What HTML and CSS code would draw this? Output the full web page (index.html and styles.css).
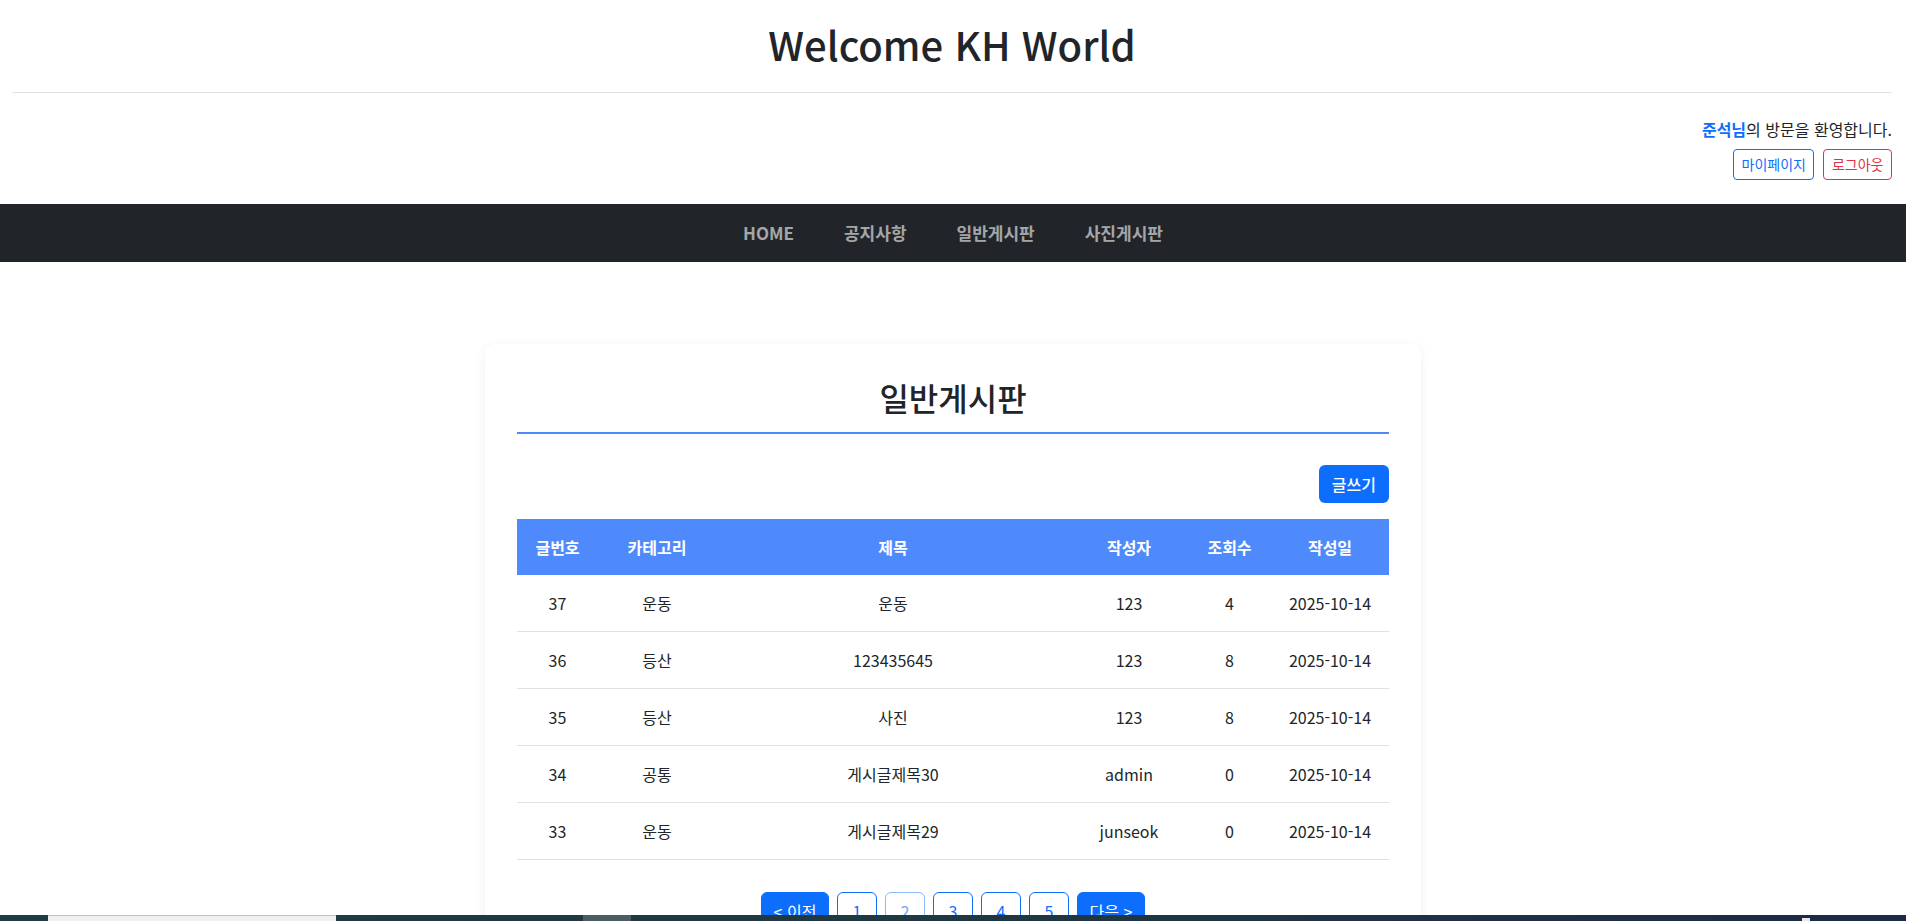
FILE: index.html
```html
<!DOCTYPE html>
<html lang="ko">
<head>
<meta charset="utf-8">
<title>Welcome KH World</title>
<link rel="stylesheet" href="styles.css">
</head>
<body>
<header class="site-header">
  <h1 class="site-title">Welcome KH World</h1>
  <div class="divider"></div>
  <div class="user-area">
    <p class="welcome"><strong class="user-name">준석님</strong>의 방문을 환영합니다.</p>
    <div class="user-actions">
      <a class="btn-sm btn-outline-primary" href="#">마이페이지</a>
      <a class="btn-sm btn-outline-danger" href="#">로그아웃</a>
    </div>
  </div>
</header>
<nav class="main-nav">
  <a class="nav-link" href="#">HOME</a>
  <a class="nav-link" href="#">공지사항</a>
  <a class="nav-link" href="#">일반게시판</a>
  <a class="nav-link" href="#">사진게시판</a>
</nav>
<main class="content">
  <section class="board-card">
    <h2 class="board-title">일반게시판</h2>
    <div class="board-toolbar">
      <a class="btn-write" href="#">글쓰기</a>
    </div>
    <table class="board-table">
      <colgroup>
        <col class="c-no"><col class="c-cat"><col class="c-title"><col class="c-writer"><col class="c-views"><col class="c-date">
      </colgroup>
      <thead>
        <tr><th>글번호</th><th>카테고리</th><th>제목</th><th>작성자</th><th>조회수</th><th>작성일</th></tr>
      </thead>
      <tbody>
        <tr><td>37</td><td>운동</td><td>운동</td><td>123</td><td>4</td><td>2025-10-14</td></tr>
        <tr><td>36</td><td>등산</td><td>123435645</td><td>123</td><td>8</td><td>2025-10-14</td></tr>
        <tr><td>35</td><td>등산</td><td>사진</td><td>123</td><td>8</td><td>2025-10-14</td></tr>
        <tr><td>34</td><td>공통</td><td>게시글제목30</td><td>admin</td><td>0</td><td>2025-10-14</td></tr>
        <tr><td>33</td><td>운동</td><td>게시글제목29</td><td>junseok</td><td>0</td><td>2025-10-14</td></tr>
      </tbody>
    </table>
    <div class="pagination">
      <a class="page-btn page-nav" href="#">&lt; 이전</a>
      <a class="page-btn" href="#">1</a>
      <a class="page-btn page-current" href="#">2</a>
      <a class="page-btn" href="#">3</a>
      <a class="page-btn" href="#">4</a>
      <a class="page-btn" href="#">5</a>
      <a class="page-btn page-nav" href="#">다음 &gt;</a>
    </div>
  </section>
</main>
<div class="taskbar">
  <span class="tb-search"></span>
  <span class="tb-app"></span>
  <span class="tb-spacer"></span>
  <span class="tb-tray"></span>
</div>
</body>
</html>
```
FILE: styles.css
```css
* { box-sizing: border-box; }
html, body { margin: 0; padding: 0; }
body {
  font-family: "Noto Sans CJK KR", "Noto Sans", sans-serif;
  font-size: 16px;
  line-height: 1.5;
  color: #212529;
  background: #fff;
}
a { text-decoration: none; }

.site-header { padding: 20px 14px 0 12px; }
.site-title {
  margin: 0 0 24px;
  text-align: center;
  font-size: 40px;
  font-weight: 500;
  line-height: 1.2;
  color: #212529;
}
.divider { height: 1px; background: #dee2e6; }
.user-area {
  display: flex;
  flex-direction: column;
  align-items: flex-end;
  padding: 24px 0 24px;
}
.welcome { margin: 0; font-size: 16px; line-height: 24px; }
.user-name { color: #0d6efd; font-weight: 700; }
.user-actions { display: flex; gap: 9px; margin-top: 8px; }
.btn-sm {
  display: inline-block;
  font-size: 14px;
  line-height: 21px;
  padding: 4px 7.5px;
  border: 1px solid;
  border-radius: 4px;
  background: #fff;
}
.btn-outline-primary { color: #0d6efd; border-color: #0d6efd; }
.btn-outline-danger { color: #dc3545; border-color: #dc3545; }

.main-nav {
  height: 58px;
  background: #212529;
  display: flex;
  justify-content: center;
  align-items: center;
  gap: 50px;
}
.nav-link {
  color: rgba(255, 255, 255, 0.6);
  font-weight: 700;
  font-size: 17px;
}

.content { padding-top: 82px; display: flex; justify-content: center; }
.board-card {
  width: 936px;
  background: #fff;
  border-radius: 10px;
  box-shadow: 0 2px 12px rgba(0, 0, 0, 0.06);
  padding: 35px 32px 40px;
}
.board-title {
  margin: 0;
  text-align: center;
  font-size: 32px;
  font-weight: 500;
  line-height: 37px;
  padding-bottom: 16px;
  border-bottom: 2px solid #4e8afc;
  color: #212529;
}
.board-toolbar {
  display: flex;
  justify-content: flex-end;
  margin: 31px 0 16px;
}
.btn-write {
  display: inline-block;
  background: #0d6efd;
  color: #fff;
  font-size: 16px;
  font-weight: 500;
  line-height: 24px;
  padding: 7px 13px;
  border-radius: 6px;
}

.board-table {
  width: 100%;
  border-collapse: collapse;
  table-layout: fixed;
  text-align: center;
}
.c-no { width: 81px; }
.c-cat { width: 118px; }
.c-title { width: 354px; }
.c-writer { width: 118px; }
.c-views { width: 83px; }
.c-date { width: 118px; }
.board-table th {
  background: #4e8afc;
  color: #fff;
  font-weight: 700;
  font-size: 16px;
  line-height: 24px;
  padding: 16px 4px;
}
.board-table td {
  font-size: 16px;
  line-height: 24px;
  padding: 16px 4px;
  border-bottom: 1px solid #dee2e6;
}

.pagination {
  display: flex;
  justify-content: center;
  gap: 8px;
  margin-top: 32px;
}
.page-btn {
  display: inline-block;
  min-width: 40px;
  text-align: center;
  font-size: 16px;
  line-height: 24px;
  padding: 6px 10px;
  border: 1px solid #0d6efd;
  border-radius: 6px;
  color: #0d6efd;
  background: #fff;
}
.page-current { color: #6ea8fe; border-color: #8bb9fe; }
.page-nav { background: #0d6efd; color: #fff; width: 68px; padding: 6px 0; }

.taskbar {
  position: fixed;
  left: 0;
  right: 0;
  bottom: 0;
  height: 6px;
  background: linear-gradient(90deg, #1f3b44 0%, #203843 50%, #1c2a44 100%);
  display: flex;
  padding-left: 48px;
}
.tb-search {
  width: 288px;
  background: #f0f0f0;
  border-top: 1px solid #c0c0c0;
}
.tb-app { width: 48px; margin-left: 247px; background: #4b5d63; }
.tb-spacer { flex: 1; }
.tb-tray { width: 8px; margin-right: 96px; background: #e8e8e8; height: 3px; margin-top: 3px; }
```
